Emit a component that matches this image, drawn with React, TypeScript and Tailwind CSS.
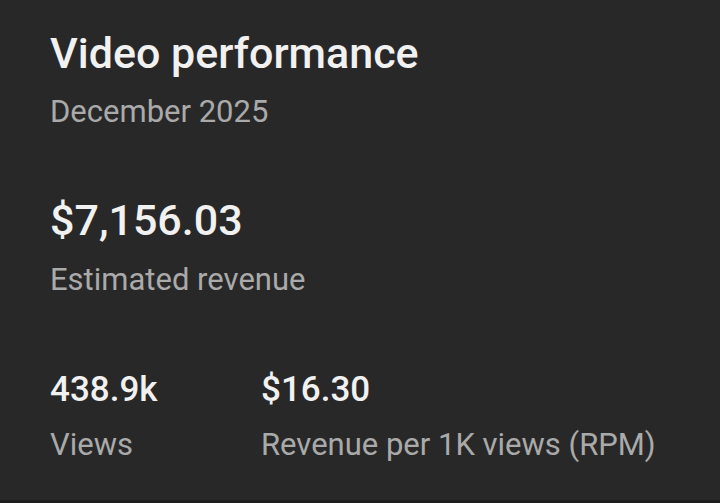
export default function App() {
  return (
    <div
      className="w-[720px] h-[503px] bg-[#282828] flex flex-col border-b-[3px] border-[#1c1c1c] pl-[50px]"
      style={{ fontFamily: "Roboto, 'Liberation Sans', sans-serif" }}
    >
      <div className="pt-[32px] text-[43px] leading-none font-medium text-[#f1f1f1]">Video performance</div>
      <div className="mt-[21px] text-[31px] leading-none text-[#aaaaaa]">December 2025</div>
      <div className="mt-[72px] text-[43px] leading-none font-medium text-[#f1f1f1]">$7,156.03</div>
      <div className="mt-[22px] text-[31px] leading-none text-[#aaaaaa]">Estimated revenue</div>
      <div className="mt-[77px] flex">
        <div className="w-[211px] flex flex-col">
          <div className="text-[35px] leading-none font-medium text-[#f1f1f1]">438.9k</div>
          <div className="mt-[22px] text-[31px] leading-none text-[#aaaaaa]">Views</div>
        </div>
        <div className="flex flex-col">
          <div className="text-[35px] leading-none font-medium text-[#f1f1f1]">$16.30</div>
          <div className="mt-[22px] text-[31px] leading-none text-[#aaaaaa]">Revenue per 1K views (RPM)</div>
        </div>
      </div>
    </div>
  );
}
